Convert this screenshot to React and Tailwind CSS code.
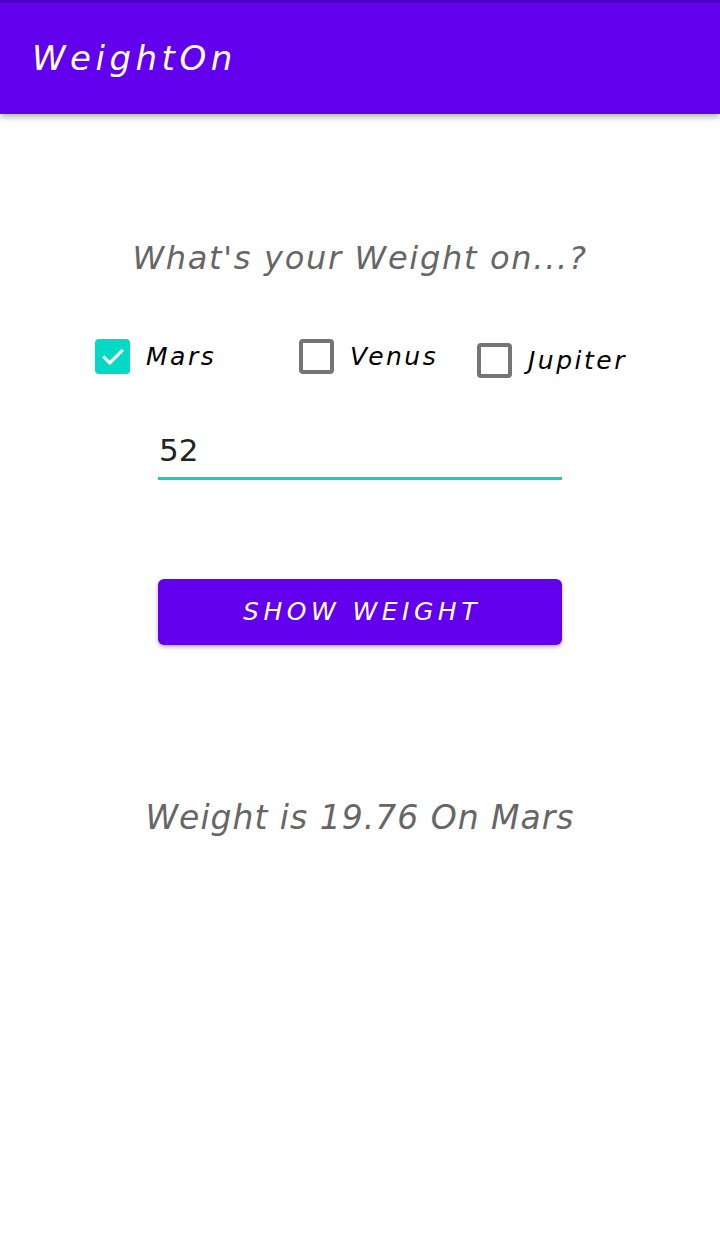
import React, { useState } from 'react';

const ratios = { Mars: 0.38, Venus: 0.91, Jupiter: 2.34 };

const CheckBox = ({ label, checked, onChange, className }) => (
  <label className={`flex items-center cursor-pointer ${className}`}>
    <span
      className={`w-[35px] h-[35px] rounded-[4px] flex items-center justify-center ${
        checked ? 'bg-[#03dac5]' : 'border-[4px] border-[#757575] bg-white'
      }`}
      onClick={onChange}
    >
      {checked && (
        <svg width="26" height="26" viewBox="0 0 24 24" fill="none">
          <path d="M4 12.5l5 5L20 6.5" stroke="white" strokeWidth="3" strokeLinecap="square" />
        </svg>
      )}
    </span>
    <span className="ml-[16px] text-[25px] italic text-black tracking-[2.5px]">{label}</span>
  </label>
);

const App = () => {
  const [planet, setPlanet] = useState('Mars');
  const [weight, setWeight] = useState('52');
  const [result, setResult] = useState('Weight is 19.76 On Mars');

  const showWeight = () => {
    const w = parseFloat(weight) || 0;
    setResult(`Weight is ${(w * ratios[planet]).toFixed(2)} On ${planet}`);
  };

  return (
    <div className="min-h-screen bg-white" style={{ fontFamily: '"DejaVu Sans", sans-serif' }}>
      {/* App bar */}
      <div className="h-[114px] bg-[#6200ee] border-t-[3px] border-[#4c00c4] shadow-[0_3px_6px_rgba(0,0,0,0.3)] flex items-center px-[32px]">
        <h1 className="text-[34px] italic text-white tracking-[4.5px]">WeightOn</h1>
      </div>

      <div className="flex flex-col items-center">
        <h2 className="mt-[120px] text-[32px] italic text-[#666666] tracking-[1.7px]">
          What's your Weight on...?
        </h2>

        <div className="mt-[56px] w-full flex items-start pl-[95px]">
          <CheckBox label="Mars" checked={planet === 'Mars'} onChange={() => setPlanet('Mars')} className="w-[204px]" />
          <CheckBox label="Venus" checked={planet === 'Venus'} onChange={() => setPlanet('Venus')} className="w-[178px]" />
          <CheckBox label="Jupiter" checked={planet === 'Jupiter'} onChange={() => setPlanet('Jupiter')} className="mt-[4px]" />
        </div>

        <div className="mt-[47px] w-[404px] border-b-[3px] border-[#1ecbbe]">
          <input
            type="text"
            value={weight}
            onChange={(e) => setWeight(e.target.value)}
            className="w-full outline-none text-[31px] text-[#222] pl-[1px] pb-[4px] bg-transparent"
          />
        </div>

        <button
          onClick={showWeight}
          className="mt-[99px] w-[404px] h-[66px] bg-[#6200ee] rounded-[6px] shadow-[0_2px_4px_rgba(0,0,0,0.3)] text-white italic text-[25px] tracking-[4.5px] pl-[4px]"
        >
          SHOW WEIGHT
        </button>

        <p className="mt-[148px] text-[33px] italic text-[#666666] tracking-[1px]">{result}</p>
      </div>
    </div>
  );
};

export default App;
